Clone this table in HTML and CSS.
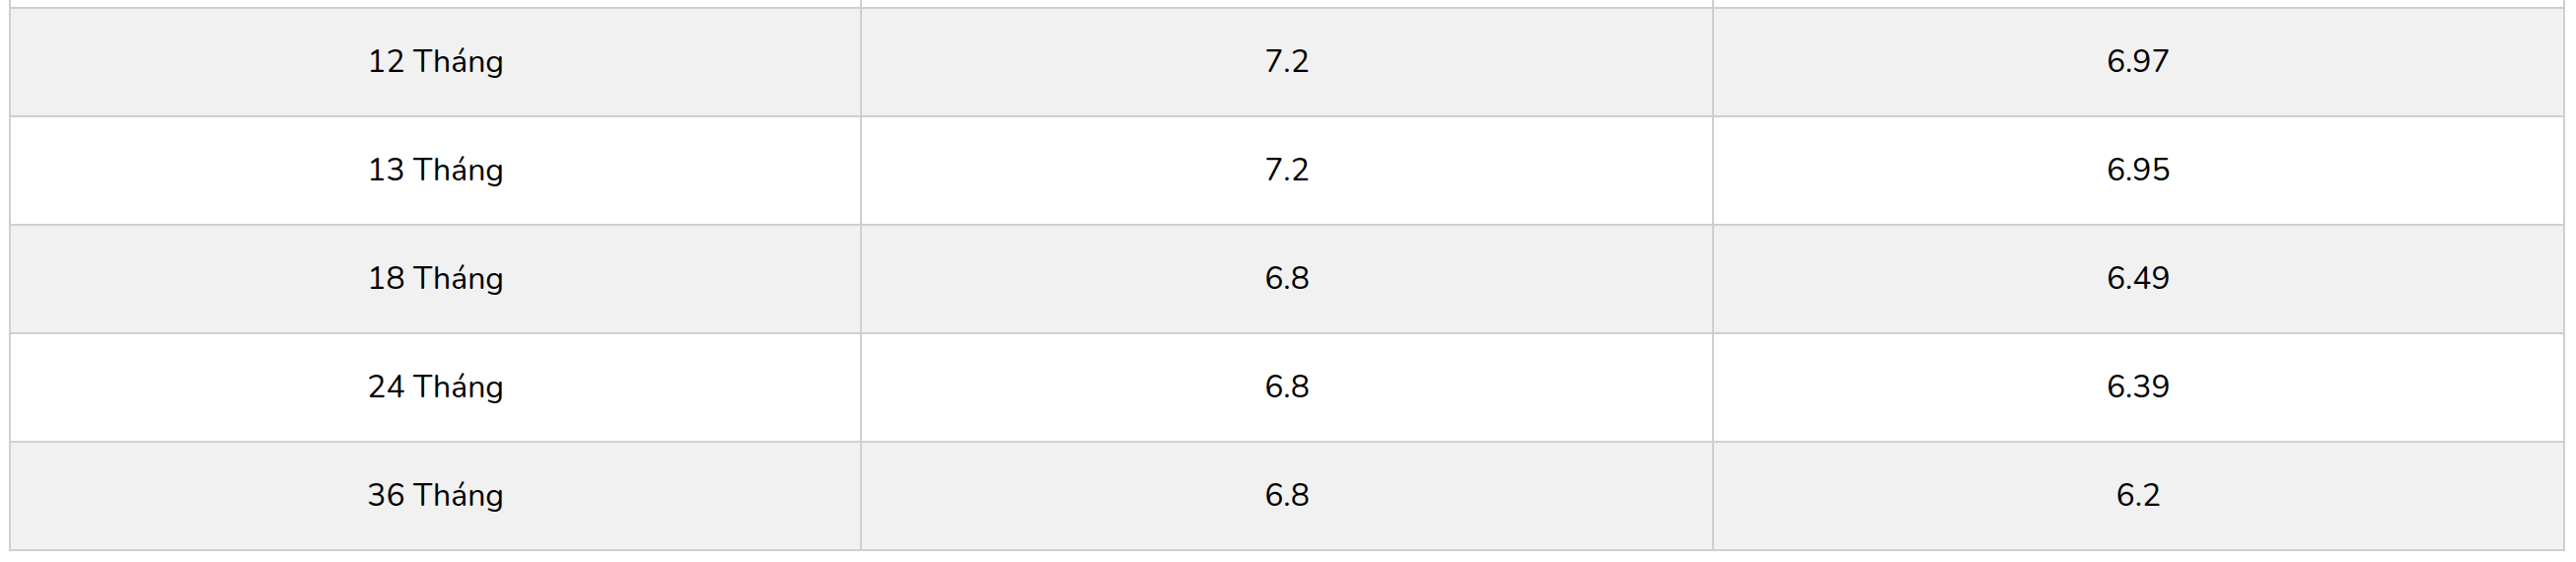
FILE: index.html
```html
<!DOCTYPE html>
<html lang="vi">
<head>
<meta charset="utf-8">
<title>Lãi suất</title>
<link rel="stylesheet" href="styles.css">
</head>
<body>
<table class="rates">
  <tbody>
    <tr class="spacer"><td></td><td></td><td></td></tr>
    <tr class="odd"><td>12 Tháng</td><td>7.2</td><td>6.97</td></tr>
    <tr><td>13 Tháng</td><td>7.2</td><td>6.95</td></tr>
    <tr class="odd"><td>18 Tháng</td><td>6.8</td><td>6.49</td></tr>
    <tr><td>24 Tháng</td><td>6.8</td><td>6.39</td></tr>
    <tr class="odd"><td>36 Tháng</td><td>6.8</td><td>6.2</td></tr>
  </tbody>
</table>
</body>
</html>
```

FILE: styles.css
```css
html, body {
  margin: 0;
  padding: 0;
  background: #ffffff;
}

body {
  font-family: "Nunito", "Lato", "Noto Sans", sans-serif;
  color: #000000;
}

.rates {
  margin-left: 9px;
  width: 2592px;
  border-collapse: collapse;
  table-layout: fixed;
}

.rates td {
  border: 2px solid #cfcfcf;
  height: 108px;
  padding: 0;
  text-align: center;
  vertical-align: middle;
  font-size: 32px;
  line-height: 1.4;
}

.rates tr.odd td {
  background: #f1f1f1;
}

.rates tr.spacer td {
  height: 7px;
  border-top: none;
}
```
